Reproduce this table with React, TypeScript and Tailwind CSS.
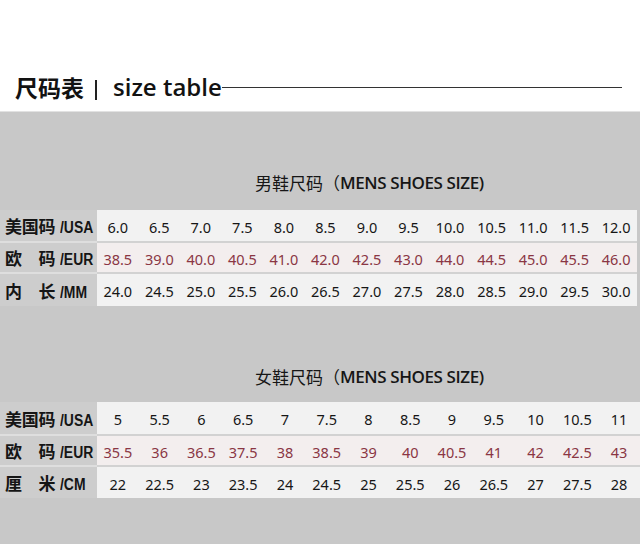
import React from "react";

const men = {
  usa: ["6.0", "6.5", "7.0", "7.5", "8.0", "8.5", "9.0", "9.5", "10.0", "10.5", "11.0", "11.5", "12.0"],
  eur: ["38.5", "39.0", "40.0", "40.5", "41.0", "42.0", "42.5", "43.0", "44.0", "44.5", "45.0", "45.5", "46.0"],
  mm: ["24.0", "24.5", "25.0", "25.5", "26.0", "26.5", "27.0", "27.5", "28.0", "28.5", "29.0", "29.5", "30.0"],
};
const women = {
  usa: ["5", "5.5", "6", "6.5", "7", "7.5", "8", "8.5", "9", "9.5", "10", "10.5", "11"],
  eur: ["35.5", "36", "36.5", "37.5", "38", "38.5", "39", "40", "40.5", "41", "42", "42.5", "43"],
  cm: ["22", "22.5", "23", "23.5", "24", "24.5", "25", "25.5", "26", "26.5", "27", "27.5", "28"],
};

const cjk = "font-['Noto_Sans_CJK_SC','Noto_Sans',sans-serif]";

function Label({ chars, code }: { chars: [string, string, string]; code: string }) {
  return (
    <div className={`w-[97px] shrink-0 flex items-center pl-[5px] pt-[3px] text-[#151515] ${cjk}`}>
      <div className="flex items-baseline">
        {chars.map((c, i) => (
          <span key={i} className="w-[16.7px] text-[17px] font-bold leading-[20px] text-center">
            {c}
          </span>
        ))}
        <span className="ml-[5px] text-[16px] font-bold leading-[20px] font-['Liberation_Sans',sans-serif] scale-x-[0.87] origin-left inline-block">
          {code}
        </span>
      </div>
    </div>
  );
}

function Row({
  label,
  values,
  red,
  first,
  h,
}: {
  label: React.ReactNode;
  values: string[];
  red?: boolean;
  first?: boolean;
  h: string;
}) {
  return (
    <div className={`flex ${h}`}>
      <div className={`flex bg-[#cdcdcd] ${first ? "" : "border-t-2 border-[#dedede]"}`}>{label}</div>
      <div
        className={`flex flex-1 ${red ? "bg-[#f3eeee]" : "bg-[#f2f2f2]"} ${
          first ? "" : "border-t-2 border-[#d2d2d2]"
        }`}
      >
        {values.map((v, i) => (
          <div
            key={i}
            className={`flex-1 flex items-center justify-center pt-[4px] text-[14.5px] font-['Noto_Sans',sans-serif] ${
              red ? "text-[#8a3644]" : "text-[#161616]"
            }`}
          >
            {v}
          </div>
        ))}
      </div>
    </div>
  );
}

function SectionTitle({ cn }: { cn: string }) {
  return (
    <div className="h-[32px] flex items-center pl-[255px] text-[#161616]">
      <span className={`text-[17px] leading-none ${cjk}`}>{cn}（</span>
      <span className="text-[17px] leading-none font-semibold tracking-[-0.4px] font-['Open_Sans',sans-serif]">
        MENS SHOES SIZE)
      </span>
    </div>
  );
}

export default function App() {
  return (
    <div className="w-[640px] h-[544px] overflow-hidden bg-[#c8c8c8]">
      <div className="h-[112px] bg-white pt-[71px] pl-[15px] border-b border-[#e2e2e2]">
        <div className="h-[32px] flex items-center text-[#121212]">
          <span className={`text-[23px] font-bold leading-none ${cjk}`}>尺码表</span>
          <span className="ml-[11px] mt-[6px] w-[2px] h-[20px] bg-[#222]" />
          <span className="ml-[16px] text-[24px] font-semibold leading-none font-['Open_Sans',sans-serif]">
            size table
          </span>
          <span className="flex-1 mr-[18px] mt-[1px] h-[1px] bg-[#333]" />
        </div>
      </div>

      <div className="pt-[54px]">
        <SectionTitle cn="男鞋尺码" />
        <div className="mt-[12px] pr-[3px]">
          <Row h="h-[31px]" first label={<Label chars={["美", "国", "码"]} code="/USA" />} values={men.usa} />
          <Row h="h-[31px]" red label={<Label chars={["欧", " ", "码"]} code="/EUR" />} values={men.eur} />
          <Row h="h-[34px]" label={<Label chars={["内", " ", "长"]} code="/MM" />} values={men.mm} />
        </div>

        <div className="mt-[54px]">
          <SectionTitle cn="女鞋尺码" />
        </div>
        <div className="mt-[10px]">
          <Row h="h-[32px]" first label={<Label chars={["美", "国", "码"]} code="/USA" />} values={women.usa} />
          <Row h="h-[31px]" red label={<Label chars={["欧", " ", "码"]} code="/EUR" />} values={women.eur} />
          <Row h="h-[33px]" label={<Label chars={["厘", " ", "米"]} code="/CM" />} values={women.cm} />
        </div>
      </div>
    </div>
  );
}
